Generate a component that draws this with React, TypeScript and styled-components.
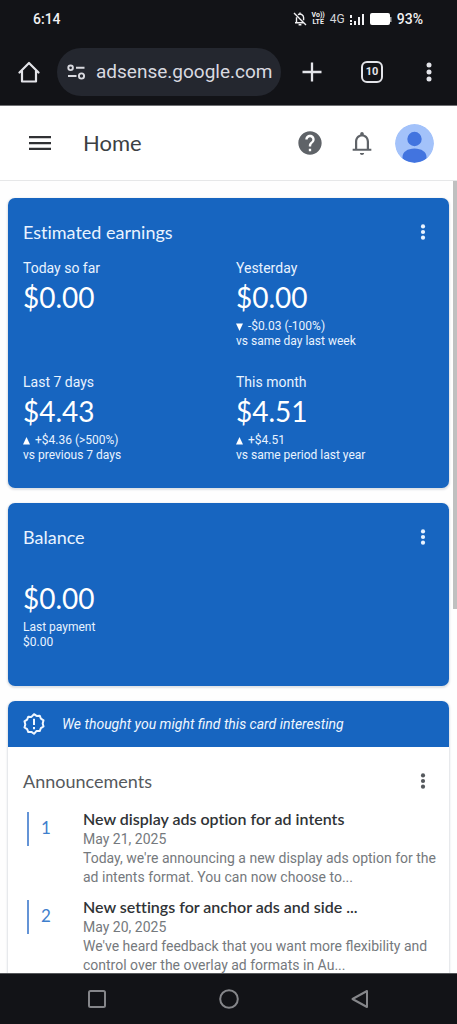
import React from "react";
import styled, { createGlobalStyle } from "styled-components";

const brand = `"Lato", "Roboto", sans-serif`;

const GlobalStyle = createGlobalStyle`
  *, *::before, *::after { box-sizing: border-box; }
  body { margin: 0; background: #fefefe; font-family: "Roboto", "Liberation Sans", sans-serif; }
  h1, h2, h3, p, ol { margin: 0; padding: 0; }
  svg { display: block; }
`;

const Screen = styled.div`
  display: flex;
  flex-direction: column;
  height: 100vh;
`;

const StatusBar = styled.div`
  display: flex;
  align-items: center;
  height: 38px;
  padding: 0 34px 0 33px;
  background: #121317;
  color: #f1f1f3;
  font-size: 14px;
  font-weight: 500;
`;

const StatusIcons = styled.div`
  display: flex;
  align-items: center;
  gap: 5px;
  margin-left: auto;
`;

const Volte = styled.span`
  display: grid;
  font-size: 7px;
  line-height: 7px;
  font-weight: 700;
  text-align: center;
`;

const Network = styled.span`
  font-size: 12px;
  font-weight: 400;
  color: #d5d6da;
`;

const BrowserBar = styled.div`
  display: flex;
  align-items: center;
  height: 68px;
  background: #121317;
  border-bottom: 1px solid #6f7073;
`;

const IconButton = styled.button<{ $width: number }>`
  display: flex;
  align-items: center;
  justify-content: center;
  flex: none;
  width: ${(p) => p.$width}px;
  height: 48px;
  padding: 0;
  border: 0;
  background: none;
  color: inherit;
`;

const BrowserButton = styled(IconButton)`
  color: #e3e4e9;
`;

const AddressPill = styled.label`
  display: flex;
  align-items: center;
  gap: 10px;
  flex: 1;
  min-width: 0;
  height: 48px;
  padding: 0 6px 0 10px;
  border-radius: 24px;
  background: #24272f;
  color: #d9dae0;
  svg { flex: none; }
`;

const AddressInput = styled.input`
  flex: 1;
  min-width: 0;
  padding: 0;
  border: 0;
  outline: 0;
  background: none;
  color: inherit;
  font: 400 19px/28px "Roboto", sans-serif;
`;

const TabCount = styled.span`
  display: grid;
  place-items: center;
  width: 22px;
  height: 22px;
  border: 2px solid currentColor;
  border-radius: 6px;
  font: 700 11px/16px "Roboto", sans-serif;
`;

const AppHeader = styled.header`
  display: flex;
  align-items: center;
  flex: none;
  height: 75px;
  padding: 0 23px 0 14px;
  border-bottom: 1px solid #e6e7e8;
  background: #fff;
  color: #5f6368;
`;

const PageTitle = styled.h1`
  margin-left: 17px;
  margin-right: auto;
  color: #3c4043;
  font: 400 22px/28px ${brand};
`;

const AvatarButton = styled(IconButton)`
  margin-left: 7px;
  height: 39px;
  border-radius: 50%;
  overflow: hidden;
`;

const Viewport = styled.div`
  position: relative;
  flex: 1;
  min-height: 0;
  overflow: hidden;
`;

const ScrollThumb = styled.div`
  position: absolute;
  top: 0;
  right: 0;
  width: 4px;
  height: 54%;
  background: #bfc0c0;
`;

const Cards = styled.main`
  display: flex;
  flex-direction: column;
  gap: 15px;
  padding: 17px 8px;
`;

const Card = styled.section<{ $tone?: "blue" | "white"; $bottom: number }>`
  padding-bottom: ${(p) => p.$bottom}px;
  border-radius: 7px;
  overflow: hidden;
  background: ${(p) => (p.$tone === "white" ? "#fff" : "#1765c0")};
  color: ${(p) => (p.$tone === "white" ? "#55595d" : "#e9f3ff")};
  box-shadow: 0 1px 2px 1px #dfe2e6;
`;

const CardHead = styled.div`
  display: flex;
  align-items: center;
  justify-content: space-between;
  height: 40px;
  margin: 14px 14px 0 15px;
`;

const CardTitle = styled.h2`
  font: 400 18px/24px ${brand};
  font-variant-ligatures: none;
`;

const MenuButton = styled(IconButton)`
  height: 40px;
`;

const MetricGrid = styled.div`
  display: grid;
  grid-template-columns: 1fr 1fr;
  row-gap: 23px;
  margin: 6px 0 0 15px;
`;

const MetricLabel = styled.h3`
  font: 400 14px/20px "Roboto", sans-serif;
`;

const Amount = styled.p`
  color: #fff;
  font: 400 28px/38px ${brand};
`;

const Note = styled.p`
  margin-top: 3px;
  font-size: 12px;
  line-height: 15px;
`;

const Delta = styled.span`
  display: flex;
  align-items: center;
  gap: 5px;
`;

const BalanceBody = styled.div`
  margin: 22px 15px 0;
`;

const Banner = styled.div`
  display: flex;
  align-items: center;
  gap: 17px;
  height: 46px;
  padding: 0 15px;
  background: #1765c0;
  color: #f0f7ff;
  font-size: 14px;
  font-style: italic;
`;

const NewsList = styled.ol`
  display: grid;
  gap: 10px;
  margin: 8px 12px 0 19px;
  list-style: none;
`;

const NewsItem = styled.li`
  display: grid;
  grid-template-columns: 56px 1fr;
  align-items: start;
`;

const Rank = styled.span`
  height: 34px;
  margin-top: 3px;
  padding-left: 12px;
  border-left: 2px solid #6494d6;
  color: #3f7fcd;
  font: 400 17px/32px ${brand};
`;

const NewsTitle = styled.h3`
  color: #303336;
  font: 600 16px/20px ${brand};
  font-variant-ligatures: none;
`;

const NewsLink = styled.a`
  color: inherit;
  text-decoration: none;
`;

const NewsText = styled.p`
  color: #75797d;
  font-size: 14px;
  line-height: 19px;
`;

const NewsDate = styled(NewsText)`
  line-height: 20px;
`;

const NavBar = styled.nav`
  display: flex;
  align-items: center;
  flex: none;
  height: 51px;
  padding: 0 31px;
  border-top: 1px solid #55575a;
  background: #121317;
`;

const NavButton = styled.button`
  display: flex;
  flex: 1;
  justify-content: center;
  padding: 0;
  border: 0;
  background: none;
  color: #85868a;
`;

const Dots = ({ size }: { size: number }) => (
  <svg width={size} height={size} viewBox="0 0 24 24" fill="currentColor">
    <circle cx="12" cy="4.5" r="2.8" />
    <circle cx="12" cy="12" r="2.8" />
    <circle cx="12" cy="19.5" r="2.8" />
  </svg>
);

const MutedBell = () => (
  <svg width="14" height="14" viewBox="0 0 14 14" fill="none" stroke="currentColor" strokeWidth="1.4">
    <path d="M1 1l12 12M3.5 5.2v5.3M2 10.7h8.5M5 2.6C7.8 1 10.6 3 10.6 5.6v2.6M7 .6v1.5M5.6 12.7h2.8" />
  </svg>
);

const Signal = () => (
  <svg width="15" height="13" viewBox="0 0 15 13" fill="currentColor">
    <path d="M0 2h2v3H0zM0 7h2v2H0zM0 10h2v2H0zM4 8h2v4H4zM8 4h2v8H8zM12 1h2v11h-2z" />
  </svg>
);

const Battery = () => (
  <svg width="22" height="12" viewBox="0 0 22 12" fill="#fff">
    <rect x="0" y="0" width="20" height="12" rx="2" />
    <rect x="20" y="4" width="1.5" height="5" fill="#aaa" />
  </svg>
);

const Triangle = ({ up }: { up: boolean }) => (
  <svg width="7" height="8" viewBox="0 0 7 8" fill="#fff">
    <path d={up ? "M3.5 0L7 7.5H0z" : "M0 .5h7L3.5 8z"} />
  </svg>
);

type Metric = { label: string; amount: string; up?: boolean; change?: string; versus?: string };

const metrics: Metric[] = [
  { label: "Today so far", amount: "$0.00" },
  { label: "Yesterday", amount: "$0.00", up: false, change: "-$0.03 (-100%)", versus: "vs same day last week" },
  { label: "Last 7 days", amount: "$4.43", up: true, change: "+$4.36 (>500%)", versus: "vs previous 7 days" },
  { label: "This month", amount: "$4.51", up: true, change: "+$4.51", versus: "vs same period last year" },
];

const news = [
  {
    title: "New display ads option for ad intents",
    date: "May 21, 2025",
    text: "Today, we're announcing a new display ads option for the ad intents format. You can now choose to...",
  },
  {
    title: "New settings for anchor ads and side ...",
    date: "May 20, 2025",
    text: "We've heard feedback that you want more flexibility and control over the overlay ad formats in Au...",
  },
];

const Head = ({ title }: { title: string }) => (
  <CardHead>
    <CardTitle>{title}</CardTitle>
    <MenuButton $width={24} aria-label={`${title} options`}>
      <Dots size={18} />
    </MenuButton>
  </CardHead>
);

export default function App() {
  return (
    <Screen>
      <GlobalStyle />
      <StatusBar>
        <span>6:14</span>
        <StatusIcons>
          <MutedBell />
          <Volte>
            <span>Vo))</span>
            <span>LTE</span>
          </Volte>
          <Network>4G</Network>
          <Signal />
          <Battery />
          <span>93%</span>
        </StatusIcons>
      </StatusBar>

      <BrowserBar>
        <BrowserButton $width={57} aria-label="Browser home">
          <svg width="22" height="22" viewBox="0 0 22 22" fill="none" stroke="currentColor" strokeWidth="2.2" strokeLinejoin="round" strokeLinecap="round">
            <path d="M1.5 11.5L11 2l9.5 9.5M4 10v10.5h14V10" />
          </svg>
        </BrowserButton>
        <AddressPill>
          <svg width="19" height="16" viewBox="0 0 19 16" fill="none" stroke="currentColor" strokeWidth="1.9">
            <circle cx="3.6" cy="3.8" r="2.3" />
            <path d="M9 3.8h8.500M1 12h8.500" />
            <circle cx="14.5" cy="12" r="2.6" />
          </svg>
          <AddressInput type="text" aria-label="Address" defaultValue="adsense.google.com" />
        </AddressPill>
        <BrowserButton $width={62} aria-label="New tab">
          <svg width="20" height="20" viewBox="0 0 20 20" stroke="currentColor" strokeWidth="2.3">
            <path d="M10 .5v19M.5 10h19" />
          </svg>
        </BrowserButton>
        <BrowserButton $width={58} aria-label="Open tabs">
          <TabCount>10</TabCount>
        </BrowserButton>
        <BrowserButton $width={56} aria-label="Browser menu">
          <svg width="6" height="20" viewBox="0 0 6 20" fill="currentColor">
            <circle cx="3" cy="3" r="2.5" />
            <circle cx="3" cy="10" r="2.5" />
            <circle cx="3" cy="17" r="2.5" />
          </svg>
        </BrowserButton>
      </BrowserBar>

      <AppHeader>
        <IconButton $width={52} aria-label="Main menu">
          <svg width="22" height="16" viewBox="0 0 22 16" fill="#303134">
            <path d="M0 1h22v2.300H0zM0 6.900h22v2.300H0zM0 12.800h22v2.300H0z" />
          </svg>
        </IconButton>
        <PageTitle>Home</PageTitle>
        <IconButton $width={52} aria-label="Help">
          <svg width="28" height="28" viewBox="0 0 24 24" fill="currentColor">
            <path d="M12 2C6.480 2 2 6.480 2 12s4.480 10 10 10 10-4.480 10-10S17.520 2 12 2zm1 17h-2v-2h2v2zm2.070-7.750l-.9.920C13.450 12.900 13 13.500 13 15h-2v-.5c0-1.100.45-2.100 1.170-2.830l1.240-1.260c.37-.36.590-.86.590-1.410 0-1.100-.9-2-2-2s-2 .9-2 2H8c0-2.210 1.790-4 4-4s4 1.790 4 4c0 .88-.36 1.680-.93 2.250z" />
          </svg>
        </IconButton>
        <IconButton $width={52} aria-label="Notifications">
          <svg width="28" height="28" viewBox="0 0 24 24" fill="currentColor">
            <path d="M18 17v-6c0-3.070-1.630-5.640-4.500-6.320V4c0-.83-.67-1.500-1.500-1.500s-1.500.67-1.500 1.500v.68C7.640 5.360 6 7.920 6 11v6H4v1.700h16V17zm-1.900 0H7.900v-6c0-2.480 1.510-4.500 4.100-4.500s4.100 2.020 4.100 4.500zM12 22.300c1 0 1.800-.7 1.800-1.700h-3.600c0 1 .8 1.700 1.800 1.700z" />
          </svg>
        </IconButton>
        <AvatarButton $width={39} aria-label="Account">
          <svg width="39" height="39" viewBox="0 0 39 39">
            <circle cx="19.5" cy="19.5" r="19.5" fill="#a3c2fa" />
            <circle cx="19.5" cy="15" r="7.2" fill="#4274df" />
            <path d="M7.500 33c0-5 5-8.500 12-8.500S31.500 28 31.500 33v1.500a19.500 19.500 0 0 1-24 0z" fill="#4274df" />
          </svg>
        </AvatarButton>
      </AppHeader>

      <Viewport>
        <Cards>
          <Card $bottom={25}>
            <Head title="Estimated earnings" />
            <MetricGrid>
              {metrics.map((m) => (
                <div key={m.label}>
                  <MetricLabel>{m.label}</MetricLabel>
                  <Amount>{m.amount}</Amount>
                  {m.change && (
                    <Note>
                      <Delta>
                        <Triangle up={!!m.up} />
                        {m.change}
                      </Delta>
                      {m.versus}
                    </Note>
                  )}
                </div>
              ))}
            </MetricGrid>
          </Card>

          <Card $bottom={36}>
            <Head title="Balance" />
            <BalanceBody>
              <Amount>$0.00</Amount>
              <Note>
                Last payment
                <br />
                $0.00
              </Note>
            </BalanceBody>
          </Card>

          <Card $tone="white" $bottom={16}>
            <Banner>
              <svg width="22" height="22" viewBox="0 0 22 22" fill="none" stroke="currentColor" strokeWidth="2" strokeLinejoin="round">
                <path d="M11 1.200l2.600 1.700 3.100-.2 1.200 2.900 2.600 1.700-.8 3.100.8 3.100-2.600 1.700-1.200 2.900-3.100-.2L11 20.800l-2.600-1.900-3.100.2-1.200-2.900-2.600-1.700.8-3.100-.8-3.100 2.600-1.700 1.200-2.900 3.100.2z" />
                <path d="M11 5.800v6.200M11 14v2.200" />
              </svg>
              We thought you might find this card interesting
            </Banner>
            <Head title="Announcements" />
            <NewsList>
              {news.map((n, i) => (
                <NewsItem key={n.title}>
                  <Rank>{i + 1}</Rank>
                  <div>
                    <NewsTitle>
                      <NewsLink href="#">{n.title}</NewsLink>
                    </NewsTitle>
                    <NewsDate>{n.date}</NewsDate>
                    <NewsText>{n.text}</NewsText>
                  </div>
                </NewsItem>
              ))}
            </NewsList>
          </Card>
        </Cards>
        <ScrollThumb />
      </Viewport>

      <NavBar>
        <NavButton aria-label="Recent apps">
          <svg width="20" height="20" viewBox="0 0 20 20" fill="none" stroke="currentColor" strokeWidth="2">
            <rect x="2" y="2" width="16" height="16" rx="1.5" />
          </svg>
        </NavButton>
        <NavButton aria-label="Home screen">
          <svg width="20" height="20" viewBox="0 0 20 20" fill="none" stroke="currentColor" strokeWidth="2">
            <circle cx="10" cy="10" r="8.8" />
          </svg>
        </NavButton>
        <NavButton aria-label="Back">
          <svg width="20" height="20" viewBox="0 0 20 20" fill="none" stroke="currentColor" strokeWidth="2" strokeLinejoin="round">
            <path d="M17 2v16L2.500 10z" />
          </svg>
        </NavButton>
      </NavBar>
    </Screen>
  );
}
